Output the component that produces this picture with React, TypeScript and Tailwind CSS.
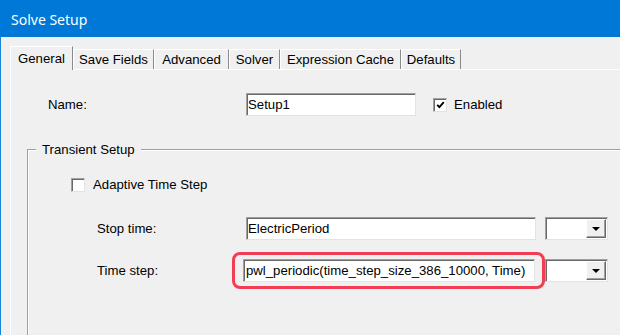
import React from "react";

const sunken =
  "border border-t-[#a0a0a0] border-l-[#a0a0a0] border-r-[#e3e3e3] border-b-[#e3e3e3] shadow-[inset_1px_1px_0_#696969] bg-white";

const tabs = [
  { label: "General", w: "w-[63px]" },
  { label: "Save Fields", w: "w-[81px]" },
  { label: "Advanced", w: "w-[75px]" },
  { label: "Solver", w: "w-[51px]" },
  { label: "Expression Cache", w: "w-[121px]" },
  { label: "Defaults", w: "w-[60px]" },
];

function CheckBox({ checked }: { checked?: boolean }) {
  return (
    <span className={`w-[14px] h-[14px] flex items-center justify-center ${sunken}`}>
      {checked && (
        <svg width="9" height="8" viewBox="0 0 9 8">
          <polyline points="1.2,3.8 3.4,6.2 7.8,1.2" fill="none" stroke="#000" strokeWidth="1.9" />
        </svg>
      )}
    </span>
  );
}

function Combo() {
  return (
    <div className={`w-[63px] h-[23px] flex justify-end p-px ${sunken}`}>
      <div className="w-[20px] h-[19px] flex items-center justify-center bg-[#f0f0f0] border border-t-white border-l-white border-r-[#696969] border-b-[#696969] shadow-[inset_-1px_-1px_0_#a0a0a0]">
        <svg width="8" height="4" viewBox="0 0 8 4">
          <polygon points="0,0 8,0 4,4" fill="#000" />
        </svg>
      </div>
    </div>
  );
}

export default function App() {
  return (
    <div className="w-[620px] h-[335px] overflow-hidden bg-[#f0f0f0] flex flex-col text-[13.2px] text-black font-['Liberation_Sans',Arial,sans-serif]">
      {/* title bar */}
      <div className="h-[37px] shrink-0 bg-[#0078d7] pl-[11px] pt-[2px] flex items-center text-white text-[14px] font-['Noto_Sans',sans-serif]">
        Solve Setup
      </div>

      <div className="flex-1 flex flex-col border-l border-[#1883d7] pl-[9px] pt-[9px]">
        {/* tabs */}
        <div className="h-[23px] flex items-end">
          {tabs.map((t, i) =>
            i === 0 ? (
              <div
                key={t.label}
                className={`${t.w} h-[24px] -mb-px relative z-10 bg-[#f0f0f0] flex justify-center pt-[2px] border-t border-l border-r border-t-white border-l-white border-r-[#8a8a8a]`}
              >
                {t.label}
              </div>
            ) : (
              <div
                key={t.label}
                className={`${t.w} h-[20px] flex justify-center border-t border-l border-r border-t-white border-l-white border-r-[#8a8a8a]`}
              >
                {t.label}
              </div>
            )
          )}
        </div>

        {/* panel */}
        <div className="flex-1 border-t border-l border-white pt-[23px]">
          <div className="flex items-center pl-[37px]">
            <span className="w-[198px]">Name:</span>
            <div className={`w-[170px] h-[23px] flex items-center pl-px ${sunken}`}>Setup1</div>
            <span className="ml-[17px]">
              <CheckBox checked />
            </span>
            <span className="ml-[7px]">Enabled</span>
          </div>

          <fieldset className="ml-[16px] mt-[26px] w-[620px] h-[300px] border border-[#a0a0a0] shadow-[inset_1px_1px_0_#fff]">
            <legend className="ml-[8px] px-[6px] leading-[15px] bg-[#f0f0f0]">Transient Setup</legend>

            <div className="mt-[20px] h-[15px] flex items-center pl-[43px]">
              <CheckBox />
              <span className="ml-[8px]">Adaptive Time Step</span>
            </div>

            <div className="mt-[25px] flex items-center pl-[69px]">
              <span className="w-[149px]">Stop time:</span>
              <div className={`w-[290px] h-[23px] flex items-center pl-px ${sunken}`}>ElectricPeriod</div>
              <span className="ml-[9px]">
                <Combo />
              </span>
            </div>

            <div className="mt-[19px] flex items-center pl-[69px]">
              <span className="w-[146px]">Time step:</span>
              <div className="relative">
                <div className={`w-[292px] h-[23px] flex items-center pl-[2px] ${sunken}`}>
                  pwl_periodic(time_step_size_386_10000, Time)
                </div>
                <span className="absolute -left-[11px] -top-[7px] -right-[10px] -bottom-[7px] border-[3px] border-[#f23d54] rounded-[8px]" />
              </div>
              <span className="ml-[10px]">
                <Combo />
              </span>
            </div>
          </fieldset>
        </div>
      </div>
    </div>
  );
}
